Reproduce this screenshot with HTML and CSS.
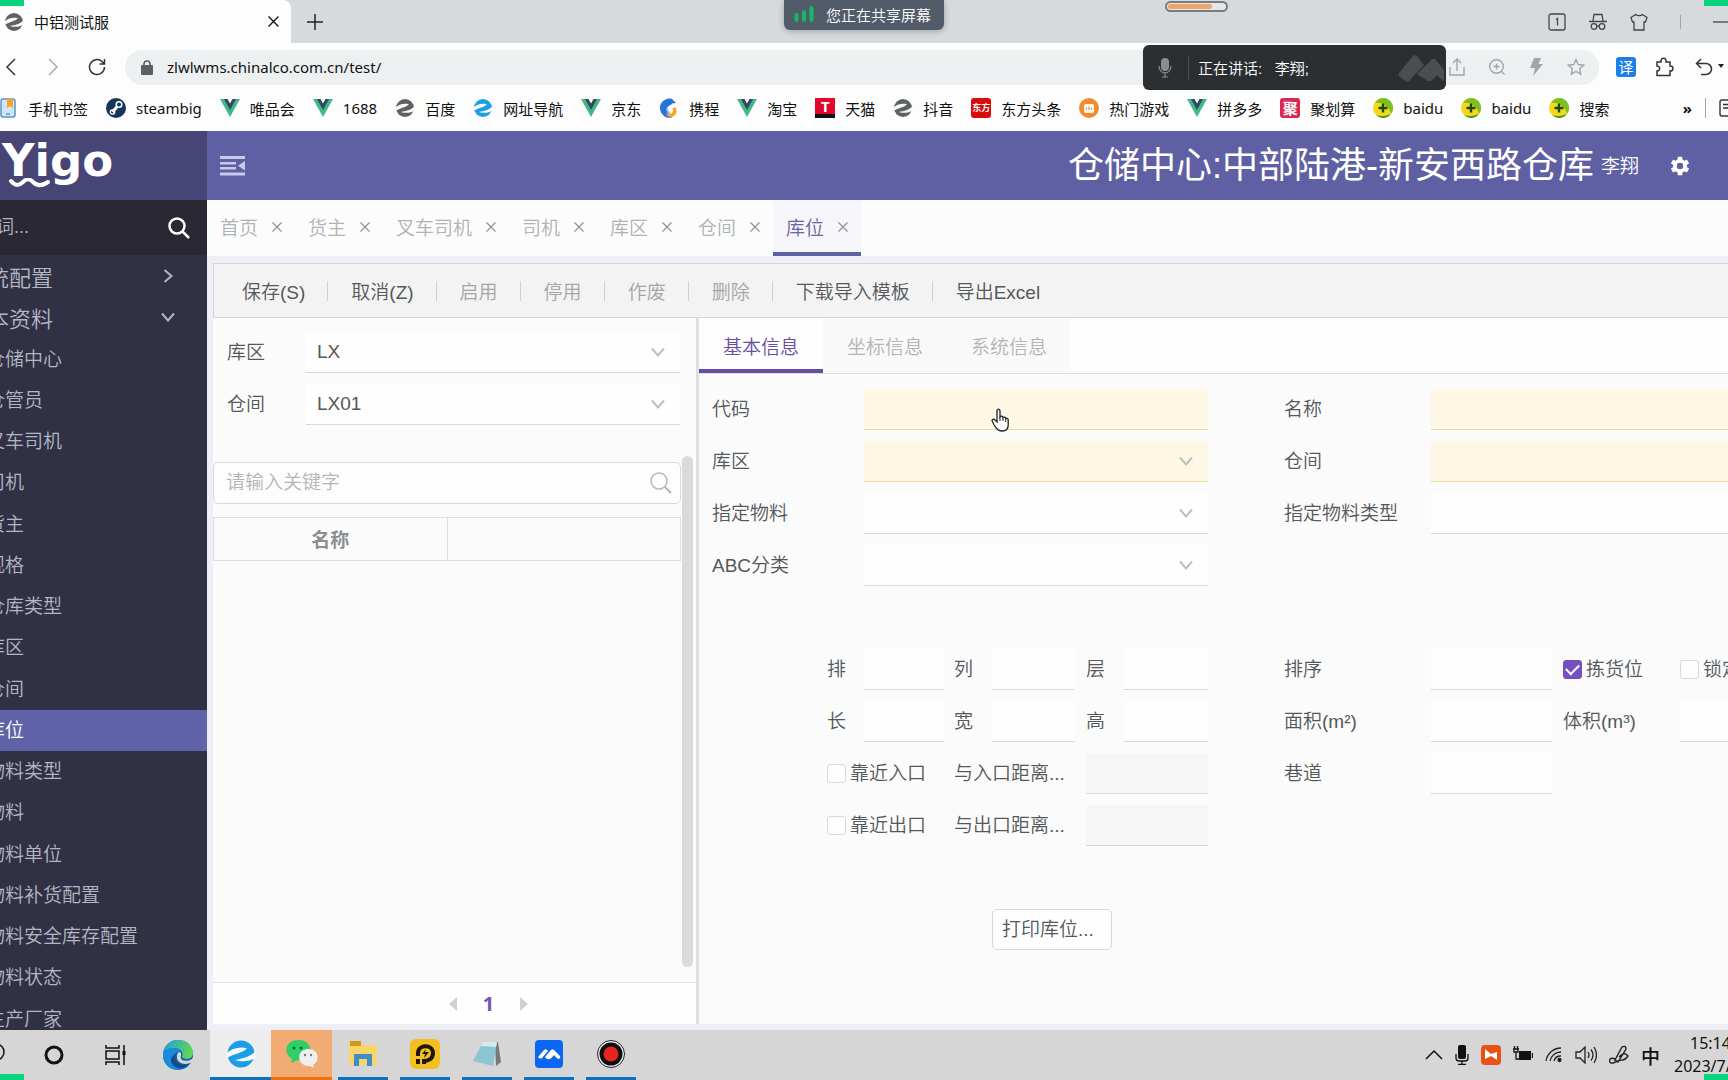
FILE: index.html
```html
<!DOCTYPE html>
<html lang="zh-CN">
<head>
<meta charset="utf-8">
<title>中铝测试服</title>
<link rel="stylesheet" href="styles.css">
</head>
<body>
<svg class="defs" aria-hidden="true">
  <symbol id="chev" viewBox="0 0 14 14"><path d="M1 3.5 7 10.5 13 3.5" fill="none" stroke="currentColor" stroke-width="2"/></symbol>
  <symbol id="close" viewBox="0 0 10 10"><path d="M.5.5l9 9M9.500.5l-9 9" fill="none" stroke="currentColor" stroke-width="1.200"/></symbol>
  <symbol id="vue" viewBox="0 0 20 20"><path d="M0 1h20L10 19z" fill="#41b883"/><path d="M4 1h12l-6 11z" fill="#35495e"/><path d="M7.500 1h5L10 5.500z" fill="#fff"/></symbol>
  <symbol id="elogo" viewBox="0 0 20 20"><circle cx="10" cy="10" r="9" fill="currentColor"/><path d="M0 10C4 6 9 5 14 6.200C11 9.500 6 9.500 0 13z" fill="#f8f8f8"/><path d="M20 8v4.500C16 15 10 15.500 6 14C11 13 16 12 20 8z" fill="#f8f8f8"/></symbol>
  <symbol id="plus360" viewBox="0 0 20 20"><circle cx="10" cy="10" r="10" fill="#f4d81c"/><path d="M10 0a10 10 0 0 1 8 16C16 9 11 4 2 5a10 10 0 0 1 8-5z" fill="#7cc122"/><path d="M3 17A10 10 0 0 0 18 16c-5 2-10 3-15 1z" fill="#3e9a1c"/><path d="M10 5.500v9M5.500 10h9" stroke="#1c4b10" stroke-width="2.400"/></symbol>
</svg>

<div class="screen">
  <header class="browser">
    <div class="strip">
      <div class="btab">
        <svg class="i20 grey"><use href="#elogo"/></svg>
        <span>中铝测试服</span>
        <button class="plain" aria-label="关闭标签页"><svg width="11" height="11"><use href="#close"/></svg></button>
      </div>
      <button class="plain newtab" aria-label="新标签页"><svg width="16" height="16" viewBox="0 0 16 16"><path d="M8 0v16M0 8h16" stroke="#222" stroke-width="1.500"/></svg></button>
      <div class="winicons">
        <svg width="18" height="18" viewBox="0 0 18 18" fill="none" stroke="#444" stroke-width="1.300"><rect x="1" y="1" width="16" height="16" rx="2"/><path d="M8 6.500l1.500-1v7"/></svg>
        <svg width="18" height="18" viewBox="0 0 18 18" fill="none" stroke="#444" stroke-width="1.300"><path d="M4 8l1-6.500h8L14 8M0 8.500h18"/><circle cx="5" cy="13.500" r="2.800"/><circle cx="13" cy="13.500" r="2.800"/><path d="M7.800 13h2.400"/></svg>
        <svg width="18" height="18" viewBox="0 0 18 18" fill="none" stroke="#444" stroke-width="1.300"><path d="M5.500 1.500C7 3 11 3 12.500 1.500L17 4.500 15.500 9H14v8H4V9H2.500L1 4.500z"/></svg>
        <i class="bar"></i>
        <svg width="15" height="18" viewBox="0 0 15 18"><path d="M0 9h15" stroke="#444" stroke-width="1.300"/></svg>
      </div>
    </div>

    <div class="navrow">
      <button class="plain" aria-label="后退"><svg width="10" height="18" viewBox="0 0 10 18" fill="none" stroke="#333" stroke-width="1.500"><path d="M9 1 1 9l8 8"/></svg></button>
      <button class="plain" aria-label="前进"><svg width="10" height="18" viewBox="0 0 10 18" fill="none" stroke="#aaa" stroke-width="1.500"><path d="M1 1l8 8-8 8"/></svg></button>
      <button class="plain" aria-label="刷新"><svg width="18" height="18" viewBox="0 0 18 18" fill="none" stroke="#333" stroke-width="1.500"><path d="M16.500 9A7.500 7.500 0 1 1 14 3.500L16 5.500M16.500 1v5h-5"/></svg></button>
      <div class="address">
        <svg width="12" height="15" viewBox="0 0 12 15"><rect y="5" width="12" height="10" rx="1" fill="#5b5e62"/><path d="M3 6V4a3 3 0 0 1 6 0v2" fill="none" stroke="#5b5e62" stroke-width="1.600"/></svg>
        <input class="url" aria-label="地址" value="zlwlwms.chinalco.com.cn/test/">
        <div class="addricons">
          <svg width="16" height="18" viewBox="0 0 16 18"><path d="M1 9v8h14V9M8 13V1M4 5l4-4 4 4"/></svg>
          <svg width="16" height="18" viewBox="0 0 16 18"><circle cx="7.500" cy="8.500" r="6.800"/><path d="M7.500 5.500v6M4.500 8.500h6M12.500 13.500l3 3"/></svg>
          <svg width="14" height="18" viewBox="0 0 14 18"><path d="M5 0h7L9.500 6H14L4 18l2-8H1z" fill="#a2a5a8" stroke="none"/></svg>
          <svg width="18" height="18" viewBox="0 0 18 18"><path d="M9 1.500l2.300 5 5.400.6-4 3.700 1.100 5.400L9 13.500l-4.800 2.700 1.100-5.400-4-3.700 5.400-.6z"/></svg>
        </div>
      </div>
      <div class="tools">
        <span class="trans">译</span>
        <svg width="20" height="20" viewBox="0 0 20 20" fill="none" stroke="#333" stroke-width="1.500"><path d="M3 5h4c-1-5 6-5 5 0h4v4c4-.5 4 5.500 0 5v4.500H3V14c3.500.5 3.500-5.500 0-5z"/></svg>
        <svg width="29" height="18" viewBox="0 0 29 18" fill="none" stroke="#333" stroke-width="1.500"><path d="M6 1 1.500 5.500 6 10M2 5.500h9a5.500 5.500 0 0 1 0 11H6"/><path d="M23 6h6l-3 4z" fill="#222" stroke="none"/></svg>
      </div>
    </div>

    <nav class="bookmarks">
      <a href="#"><svg class="i20" viewBox="0 0 20 20"><rect x="3" y="1" width="14" height="18" rx="2" fill="#cfe6fa" stroke="#5a93c9" stroke-width="1.500"/><path d="M9 1h6v9l-3-2-3 2z" fill="#f6a51c"/><path d="M8 16h4" stroke="#3b78b5"/></svg>手机书签</a>
      <a href="#"><svg class="i20" viewBox="0 0 20 20"><circle cx="10" cy="10" r="10" fill="#16355c"/><path d="M6.500 14l6.500-7.500" stroke="#fff" stroke-width="3"/><circle cx="6.500" cy="14" r="2.200" fill="none" stroke="#fff" stroke-width="1.300"/><circle cx="13" cy="6.500" r="2.800" fill="#16355c" stroke="#fff" stroke-width="1.500"/></svg>steambig</a>
      <a href="#"><svg class="i20"><use href="#vue"/></svg>唯品会</a>
      <a href="#"><svg class="i20"><use href="#vue"/></svg>1688</a>
      <a href="#"><svg class="i20 grey"><use href="#elogo"/></svg>百度</a>
      <a href="#"><svg class="i20 blue"><use href="#elogo"/></svg>网址导航</a>
      <a href="#"><svg class="i20"><use href="#vue"/></svg>京东</a>
      <a href="#"><svg class="i20" viewBox="0 0 20 20"><path d="M1 11C0 5 7-1 13 1l4 4-4 .5c0 2-5 1-5 6 0 4 3 6 6 5l-1 3C7 21 2 17 1 11z" fill="#2673d9"/><path d="M16 9c3.500 4 1 9.500-4 10-3 0-5-2-4.500-4 4 2.500 8-1 6-4.500z" fill="#f4a62a"/><path d="M8 10c0 3 1.500 4.500 3 5" fill="none" stroke="#8cc0f4" stroke-width="2"/></svg>携程</a>
      <a href="#"><svg class="i20"><use href="#vue"/></svg>淘宝</a>
      <a href="#"><span class="fav tmall">T</span>天猫</a>
      <a href="#"><svg class="i20 grey"><use href="#elogo"/></svg>抖音</a>
      <a href="#"><span class="fav east">东方</span>东方头条</a>
      <a href="#"><svg class="i20" viewBox="0 0 20 20"><circle cx="10" cy="10" r="10" fill="#f58a2c"/><rect x="5" y="6" width="10" height="9" rx="2" fill="#fff"/><path d="M7.500 12V9.500M10 12V8.500M12.500 12V9.500" stroke="#f58a2c" stroke-width="1.200"/></svg>热门游戏</a>
      <a href="#"><svg class="i20"><use href="#vue"/></svg>拼多多</a>
      <a href="#"><span class="fav ju">聚</span>聚划算</a>
      <a href="#"><svg class="i20"><use href="#plus360"/></svg>baidu</a>
      <a href="#"><svg class="i20"><use href="#plus360"/></svg>baidu</a>
      <a href="#"><svg class="i20"><use href="#plus360"/></svg>搜索</a>
      <div class="more"><b>»</b><i class="bar tall"></i><svg width="9" height="18" viewBox="0 0 9 18" fill="none" stroke="#333" stroke-width="1.400"><path d="M9 1H3a2 2 0 0 0-2 2v12a2 2 0 0 0 2 2h6M4 5.500h5M4 9h5"/></svg></div>
    </nav>
  </header>

  <div class="app">
    <aside class="side">
      <div class="logo">
        <span>Yigo</span>
        <svg class="wave" width="42" height="10" viewBox="0 0 42 10"><path d="M2 3c4 5 8 5 12 1s7-3 10 0 8 5 15 0" fill="none" stroke="#fff" stroke-width="4" stroke-linecap="round"/></svg>
      </div>
      <div class="sfind">
        <input aria-label="菜单搜索" placeholder="关键词...">
        <svg width="22" height="22" viewBox="0 0 22 22" fill="none" stroke="#fff" stroke-width="2.500"><circle cx="9" cy="9" r="7.500"/><path d="M14.500 14.500 21 21"/></svg>
      </div>
      <nav class="menu">
        <button class="group">系统配置<svg class="right" width="14" height="14"><use href="#chev"/></svg></button>
        <button class="group">基本资料<svg width="14" height="14"><use href="#chev"/></svg></button>
        <div class="items">
        <a href="#">仓储中心</a><a href="#">仓管员</a><a href="#">叉车司机</a><a href="#">司机</a><a href="#">货主</a><a href="#">规格</a><a href="#">仓库类型</a><a href="#">库区</a><a href="#">仓间</a><a href="#" class="on">库位</a><a href="#">物料类型</a><a href="#">物料</a><a href="#">物料单位</a><a href="#">物料补货配置</a><a href="#">物料安全库存配置</a><a href="#">物料状态</a><a href="#">生产厂家</a>
        </div>
      </nav>
    </aside>

    <main class="main">
      <div class="top">
        <button class="plain" aria-label="收起菜单"><svg width="25" height="20" viewBox="0 0 25 20" fill="#c9caea"><path d="M0 0h25v3H0zM0 6h16v2.500H0zM0 11h16v2.500H0zM0 16.500h25v3H0zM25 5v9.500l-7-4.750z"/></svg></button>
        <div class="topright">
          <span class="title">仓储中心:中部陆港-新安西路仓库</span>
          <span class="user">李翔</span>
          <svg class="gear" width="20" height="20" viewBox="0 0 20 20"><path d="M10 .8v18.400M2 5.400l16 9.200M2 14.600l16-9.200" stroke="#fff" stroke-width="4.600"/><circle cx="10" cy="10" r="7" fill="#fff"/><circle cx="10" cy="10" r="3.200" fill="#5f60a3"/></svg>
        </div>
      </div>
      <div class="ptabs">
        <div class="ptab"><a href="#">首页</a><button class="plain" aria-label="关闭首页"><svg width="10" height="10"><use href="#close"/></svg></button></div>
        <div class="ptab"><a href="#">货主</a><button class="plain" aria-label="关闭货主"><svg width="10" height="10"><use href="#close"/></svg></button></div>
        <div class="ptab"><a href="#">叉车司机</a><button class="plain" aria-label="关闭叉车司机"><svg width="10" height="10"><use href="#close"/></svg></button></div>
        <div class="ptab"><a href="#">司机</a><button class="plain" aria-label="关闭司机"><svg width="10" height="10"><use href="#close"/></svg></button></div>
        <div class="ptab"><a href="#">库区</a><button class="plain" aria-label="关闭库区"><svg width="10" height="10"><use href="#close"/></svg></button></div>
        <div class="ptab"><a href="#">仓间</a><button class="plain" aria-label="关闭仓间"><svg width="10" height="10"><use href="#close"/></svg></button></div>
        <div class="ptab on"><a href="#">库位</a><button class="plain" aria-label="关闭库位"><svg width="10" height="10"><use href="#close"/></svg></button></div>
      </div>

      <div class="work">
        <div class="actions">
          <button>保存(S)</button><i></i><button>取消(Z)</button><i></i><button disabled>启用</button><i></i><button disabled>停用</button><i></i><button disabled>作废</button><i></i><button disabled>删除</button><i></i><button>下载导入模板</button><i></i><button>导出Excel</button>
        </div>
        <div class="split">
          <section class="list">
            <div class="filters">
              <label for="fa">库区</label>
              <div class="sel"><select id="fa"><option>LX</option></select><svg width="14" height="14"><use href="#chev"/></svg></div>
              <label for="fb">仓间</label>
              <div class="sel"><select id="fb"><option>LX01</option></select><svg width="14" height="14"><use href="#chev"/></svg></div>
            </div>
            <div class="listbody">
              <div class="listmain">
                <div class="kw">
                  <input aria-label="关键字" placeholder="请输入关键字">
                  <svg width="22" height="22" viewBox="0 0 22 22" fill="none" stroke="#b3b7ba" stroke-width="1.500"><circle cx="9" cy="9" r="8"/><path d="M15 15l6 6" stroke-width="2"/></svg>
                </div>
                <table><thead><tr><th>名称</th><th></th></tr></thead></table>
              </div>
              <div class="scroll"></div>
            </div>
            <div class="pager">
              <button class="plain" aria-label="上一页"><svg width="8" height="14" viewBox="0 0 8 14"><path d="M8 0v14L0 7z" fill="#d0d0d0"/></svg></button>
              <b>1</b>
              <button class="plain" aria-label="下一页"><svg width="8" height="14" viewBox="0 0 8 14"><path d="M0 0v14l8-7z" fill="#d0d0d0"/></svg></button>
            </div>
          </section>

          <section class="detail">
            <div class="dtabs"><button class="on">基本信息</button><button>坐标信息</button><button>系统信息</button></div>
            <form class="form">
              <label class="r1 c1" for="code">代码</label><input class="r1 wide req" id="code">
              <label class="r1 c9" for="name">名称</label><input class="r1 rest req" id="name">
              <label class="r2 c1" for="area">库区</label>
              <div class="r2 wide sel req"><select id="area"><option></option></select><svg width="14" height="14"><use href="#chev"/></svg></div>
              <label class="r2 c9" for="room">仓间</label><input class="r2 rest req" id="room">
              <label class="r3 c1" for="mat">指定物料</label>
              <div class="r3 wide sel"><select id="mat"><option></option></select><svg width="14" height="14"><use href="#chev"/></svg></div>
              <label class="r3 c9" for="mtype">指定物料类型</label><input class="r3 rest" id="mtype">
              <label class="r4 c1" for="abc">ABC分类</label>
              <div class="r4 wide sel"><select id="abc"><option></option></select><svg width="14" height="14"><use href="#chev"/></svg></div>

              <label class="r6 c2" for="row">排</label><input class="r6 c3" id="row">
              <label class="r6 c4" for="col">列</label><input class="r6 c5" id="col">
              <label class="r6 c6" for="lay">层</label><input class="r6 c7" id="lay">
              <label class="r6 c9" for="ord">排序</label><input class="r6 c10" id="ord">
              <div class="r6 c11 chk"><input type="checkbox" id="pick" checked><label for="pick">拣货位</label></div>
              <div class="r6 c12 chk"><input type="checkbox" id="lock"><label for="lock">锁定</label></div>

              <label class="r7 c2" for="len">长</label><input class="r7 c3" id="len">
              <label class="r7 c4" for="wid">宽</label><input class="r7 c5" id="wid">
              <label class="r7 c6" for="hei">高</label><input class="r7 c7" id="hei">
              <label class="r7 c9" for="sq">面积(m²)</label><input class="r7 c10" id="sq">
              <label class="r7 c11" for="vol">体积(m³)</label><input class="r7 c12" id="vol">

              <div class="r8 near chk"><input type="checkbox" id="nin"><label for="nin">靠近入口</label></div>
              <label class="r8 dist" for="din">与入口距离...</label><input class="r8 dfield" id="din" disabled>
              <label class="r8 c9" for="lane">巷道</label><input class="r8 c10" id="lane">
              <div class="r9 near chk"><input type="checkbox" id="nout"><label for="nout">靠近出口</label></div>
              <label class="r9 dist" for="dout">与出口距离...</label><input class="r9 dfield" id="dout" disabled>
              <button type="button" class="print">打印库位...</button>
            </form>
          </section>
        </div>
      </div>
    </main>
  </div>

  <footer class="task">
    <div class="start">
      <svg width="54" height="26" viewBox="0 0 54 26"><circle cx="-4" cy="10" r="8" fill="none" stroke="#111" stroke-width="1.500"/></svg>
    </div>
    <button class="sys" aria-label="Cortana"><svg width="20" height="20" viewBox="0 0 20 20"><circle cx="10" cy="10" r="8" fill="none" stroke="#111" stroke-width="3"/></svg></button>
    <button class="sys" aria-label="任务视图"><svg width="22" height="20" viewBox="0 0 22 20" fill="none" stroke="#111" stroke-width="1.500"><path d="M1 0v3h13V0M1 20v-3h13v3M1 6h13v8H1zM19 0v20"/><path d="M17.500 6h3v4h-3z" fill="#111" stroke="none"/></svg></button>
    <button class="sys" aria-label="Edge"><svg width="30" height="30" viewBox="0 0 30 30"><defs><linearGradient id="eg" x1="0" y1="0" x2="1" y2="0.300"><stop offset="0" stop-color="#1f9de0"/><stop offset="1" stop-color="#5fd35c"/></linearGradient></defs><circle cx="15" cy="15" r="15" fill="#1460ad"/><path d="M0 13C2-4 29-5 30 13c0 7-9 7-11 4 4-9-13-13-19-4z" fill="url(#eg)"/><path d="M0 13c3-6 15-7 17-1-6-1-8 5-5 9 3 5 9 5 14 3C18 34-1 31 0 13z" fill="#1b8bd8"/><path d="M13 15c-3 5 2 12 13 9-6 8-17 4-18-3 0-4 2-6 5-6z" fill="#0e4b92"/><path d="M17 12c3 3-1 5 2 8 3 1.500 8 1 11-2v4l-3 1c-8 3-14-2-13-7 0-2 1-4 3-4z" fill="#d6d6d6"/></svg></button>
    <button class="ap lit" aria-label="浏览器"><svg class="blue" width="30" height="30"><use href="#elogo"/></svg></button>
    <button class="ap hot" aria-label="微信"><svg width="32" height="28" viewBox="0 0 32 28"><path d="M12 0c17 0 16 20 0 20l-7 3 1-4C-4 13 0 0 12 0z" fill="#2fcf68"/><circle cx="8" cy="8" r="1.500" fill="#12652f"/><circle cx="15" cy="8" r="1.500" fill="#12652f"/><path d="M22 9c12 0 12 13 5 16l1 3-4-2C10 27 10 9 22 9z" fill="#efefef"/><circle cx="19" cy="15" r="1.200" fill="#777"/><circle cx="25" cy="15" r="1.200" fill="#777"/></svg></button>
    <button class="ap run" aria-label="文件资源管理器"><svg width="28" height="26" viewBox="0 0 28 26"><path d="M0 1h11l2 3h15v20H0z" fill="#f9d568"/><path d="M1 0h11v5H1z" fill="#d19a1c"/><path d="M5 13h18v12h-5v-7h-8v7H5z" fill="#3d8fc9"/></svg></button>
    <button class="ap run" aria-label="D"><svg width="30" height="30" viewBox="0 0 30 30"><rect width="30" height="30" rx="6" fill="#f4bf1f"/><path d="M8 17v-3c0-9 15-9 15 0 0 6-5 8-10 8" fill="none" stroke="#1b1711" stroke-width="4"/><path d="M6 20h4v5H6zM12 20h4v5h-4z" fill="#1b1711"/><path d="M16 10l-4 5h3l-1 4 5-6h-4z" fill="#1b1711"/></svg></button>
    <button class="ap run" aria-label="记事本"><svg width="28" height="26" viewBox="0 0 28 26"><path d="M22 1h3l3 20-5 4z" fill="#777a70"/><path d="M10 1h14l-4 24L0 20z" fill="#8cc5d3"/><path d="M10 1h14l-1 5-15-1z" fill="#d4ecf1"/></svg></button>
    <button class="ap run" aria-label="会议"><svg width="28" height="28" viewBox="0 0 28 28"><rect width="28" height="28" rx="4" fill="#0b66f2"/><path d="M3 17l6-7q1.500-1.500 3 0l1 1-6 7q-2 1.500-4-1zM10 17l6-7q1.500-1.500 3 0l6 6q1 2-1 3-2 0-5-4-3 4-4.500 4Q12 20 10 17z" fill="#fff"/></svg></button>
    <button class="ap run" aria-label="录屏"><svg width="28" height="28" viewBox="0 0 28 28"><circle cx="14" cy="14" r="13.500" fill="#eee" stroke="#222"/><circle cx="14" cy="14" r="11.500" fill="#0e0c0d"/><circle cx="14" cy="14" r="7.500" fill="#e5231f"/></svg></button>
    <div class="tray">
      <svg width="18" height="20" viewBox="0 0 18 20" fill="none" stroke="#111" stroke-width="1.500"><path d="M1 14l8-8 8 8"/></svg>
      <svg width="14" height="20" viewBox="0 0 14 20"><rect x="3" width="8" height="14" rx="2" fill="#111"/><path d="M1 9v4q0 3 3 3h6q3 0 3-3V9M7 16v3M3 19.300h8" fill="none" stroke="#111" stroke-width="1.300"/></svg>
      <svg width="20" height="20" viewBox="0 0 20 20"><rect width="20" height="20" rx="4" fill="#ea4f16"/><path d="M4 4l6 5 6-2v8l-6-4-6 3z" fill="#fff"/></svg>
      <svg width="20" height="20" viewBox="0 0 20 20"><path d="M6 6h12v9H6z" fill="#111"/><path d="M19.500 8v5M0 4h6M1.500 1v3M4.500 1v3M1 4v3h4V4M3 7v7h3" stroke="#111" fill="none" stroke-width="1.300"/></svg>
      <svg width="18" height="20" viewBox="0 0 18 20" fill="none" stroke="#222" stroke-width="1.300"><path d="M1 16A15 15 0 0 1 16 3M5 16A11 11 0 0 1 16 7M9 16a7 7 0 0 1 7-5"/><circle cx="14.500" cy="15" r="1.500" fill="#111"/></svg>
      <svg width="22" height="20" viewBox="0 0 22 20" fill="none" stroke="#222" stroke-width="1.300"><path d="M1 7h4l5-5v16l-5-5H1zM13 7q2 3 0 6M16 4.500q4 5.500 0 11M19 2q5 8 0 16"/></svg>
      <svg width="20" height="20" viewBox="0 0 20 20" fill="none" stroke="#222" stroke-width="1.400"><path d="M6 15L13 2q4-2 4 2L9 17zM6 14c-7-3-7 5-2 4l5-2c5-2 6 1 10-5-3-4-6-2-9 1"/></svg>
      <span class="ime">中</span>
      <div class="clock"><span>15:14</span><span>2023/7/</span></div>
    </div>
  </footer>

  <i class="mark tl"></i><i class="mark tr"></i><i class="mark bl"></i><i class="mark br"></i>
  <div class="share"><svg width="20" height="16" viewBox="0 0 20 16" stroke="#16b866" stroke-width="4" stroke-linecap="round"><path d="M2.500 9v5M10 6v8M17.500 2v12"/></svg>您正在共享屏幕</div>
  <div class="gauge"><i></i></div>
  <div class="talk">
    <svg width="14" height="20" viewBox="0 0 14 20"><rect x="3" width="8" height="13" rx="4" fill="#8a8e91"/><path d="M1 8c0 9 12 9 12 0M7 15v4M4 19h6" fill="none" stroke="#8a8e91" stroke-width="1.200"/></svg>
    <i class="bar"></i><span>正在讲话:&nbsp;&nbsp; 李翔;</span>
    <svg class="mm" width="46" height="28" viewBox="0 0 46 28"><path d="M1 19L15 2q3-2 5 1l6 8L11 27q-3 2-5-1l-5-4q-1-1 0-3zM19 20L34 5q2-1 4 1l8 10v11q-3-1-7-6l-6 6q-3 1-5-1z" fill="#4b4d51"/></svg>
  </div>
  <svg class="hand" width="18" height="24" viewBox="0 0 18 24"><path d="M6 14V3c0-2.500 3-2.500 3 0v6c1-1.500 3-1 3 .6 1-1 2.700-.4 2.700 1 1-.8 2.500 0 2.500 1.400v5c0 4-2 6-6 6-5 0-6-3-8-6l-2-4c-.6-1.500 1.500-2.500 2.800-1z" fill="#fff" stroke="#222" stroke-width="1.300"/><path d="M9 9v4M12 10v3M14.700 11v3" stroke="#222"/></svg>
</div>
</body>
</html>
```
FILE: styles.css
```css
* { box-sizing: border-box; }
body {
  margin: 0;
  overflow: hidden;
  font-family: "Liberation Sans", "Noto Sans CJK SC", sans-serif;
  font-size: 19px;
  font-weight: 350;
  color: #54585a;
}
button, input, select { font: inherit; color: inherit; margin: 0; }
a { color: inherit; text-decoration: none; }
svg { display: block; flex: none; }
.defs { display: none; }
.plain { border: 0; padding: 0; background: none; display: block; }
.i20 { width: 20px; height: 20px; }
.grey { color: #5f6265; }
.blue { color: #1a9fe6; }
.bar { width: 1px; height: 14px; background: #a2a5a8; }
.tall { height: 20px; }
.screen { position: relative; height: 100vh; display: flex; flex-direction: column; }

/* browser chrome */
.browser { flex: none; background: #fdfdfd; color: #111; font-size: 15px; font-weight: 400; font-family: "Noto Sans", "Noto Sans CJK SC", sans-serif; }
.strip { height: 43px; display: flex; align-items: center; background: #d6dadd; }
.btab { width: 291px; height: 43px; padding: 0 12px 0 4px; display: flex; align-items: center; gap: 10px; background: #fdfdfd; border-radius: 0 8px 0 0; }
.btab button { margin-left: auto; }
.newtab { margin-left: 16px; }
.winicons { margin-left: auto; display: flex; align-items: center; gap: 23px; }
.winicons .bar { margin: 0 9px; }
.navrow { height: 48px; display: flex; align-items: center; padding: 0 4px 0 6px; }
.navrow > button { margin-right: 32px; }
.navrow > button + button { margin-right: 30px; }
.navrow > button + button + button { margin-right: 19px; }
.address { flex: 1; height: 35px; border-radius: 18px; background: #edf0f1; display: flex; align-items: center; padding: 0 14px 0 16px; gap: 14px; }
.url { flex: 1; border: 0; padding: 0; background: none; }
.addricons { display: flex; gap: 24px; fill: none; stroke: #a2a5a8; stroke-width: 1.4; }
.tools { display: flex; align-items: center; gap: 28px; padding-left: 17px; }
.tools svg + svg { margin-left: -7px; }
.trans { width: 20px; height: 20px; border-radius: 3px; background: #1d7fea; color: #fff; line-height: 20px; text-align: center; }
.tools .trans { margin-right: -10px; }
.bookmarks { height: 40px; padding-bottom: 6px; display: flex; align-items: center; gap: 18px; margin-left: -2px; white-space: nowrap; }
.bookmarks a { display: flex; align-items: center; gap: 10px; }
.fav { width: 20px; height: 20px; border-radius: 3px; color: #fff; text-align: center; line-height: 20px; font-weight: 700; }
.tmall { background: #e2062c; border-radius: 0; border-bottom: 4px solid #111; line-height: 16px; }
.east { background: #d90b0b; font-size: 9px; }
.ju { background: #db2850; }
.more { margin-left: auto; display: flex; align-items: center; gap: 13px; }

/* application frame */
.app { flex: 1; min-height: 0; display: flex; overflow: hidden; }
.side { flex: none; width: 247px; margin-left: -40px; display: flex; flex-direction: column; background: #303145; color: #b4b6c4; overflow: hidden; }
.logo { flex: none; height: 69px; padding-left: 42px; background: #464576; color: #fff; font: 700 45px/59px "DejaVu Sans", sans-serif; position: relative; }
.wave { position: absolute; left: 49px; top: 47px; }
.sfind { flex: none; height: 55px; padding-right: 17px; display: flex; align-items: center; background: #2a2833; }
.sfind input { flex: 1; min-width: 0; border: 0; padding: 0; background: none; font-size: 18px; }
.sfind input::placeholder { color: #b4b6c4; }
.menu { flex: 1; min-height: 0; overflow: hidden; }
.items { padding-top: 2px; }
.items a { display: block; height: 41px; line-height: 41px; padding-left: 26px; }
.items a:nth-child(4n) { margin-bottom: 1px; }
.items .on { background: #6063a8; color: #fff; }
.group { width: 100%; height: 41px; border: 0; background: none; padding: 0 32px 0 5px; display: flex; align-items: center; justify-content: space-between; font-size: 22px; }
.right { transform: rotate(-90deg); }

.main { flex: 1; min-width: 0; display: flex; flex-direction: column; background: #eff0f5; }
.top { flex: none; height: 69px; padding: 0 38px 0 13px; display: flex; align-items: center; justify-content: space-between; background: #5f60a3; color: #fff; }
.topright { display: flex; align-items: center; white-space: nowrap; }
.title { font-size: 36px; line-height: 69px; font-weight: 400; }
.user { margin-left: 7px; padding-bottom: 3px; }
.gear { margin-left: 31px; }
.ptabs { flex: none; height: 56px; display: flex; background: #fcfcfd; color: #b0b2b4; }
.ptab { display: flex; align-items: center; gap: 14px; padding: 0 13px; border-bottom: 4px solid transparent; }
.ptab button { color: #8f9294; padding-top: 2px; }
.ptab.on { color: #6765a0; background: #f5f5fa; border-color: #5f60a3; }

.work { flex: 1; min-height: 0; margin: 7px 0 6px 6px; display: flex; flex-direction: column; background: #fbfbfb; }
.actions { flex: none; height: 55px; padding-left: 5px; display: flex; align-items: center; background: #f3f3f3; border: 1px solid #d3d7da; border-right: 0; }
.actions button { border: 0; background: none; padding: 0 22px 1px 23px; white-space: nowrap; }
.actions button:disabled { color: #a3a5a6; }
.actions i { width: 1px; height: 20px; background: #cfd2d4; }
.split { flex: 1; min-height: 0; display: flex; }

/* location list */
.list { flex: none; width: 486px; display: flex; flex-direction: column; border-right: 3px solid #dedfe1; }
.filters { display: grid; grid-template-columns: 79px 1fr; row-gap: 11px; padding: 14px 16px 0 14px; align-items: center; margin-bottom: 31px; }
label { padding-bottom: 4px; }
.sel { display: grid; align-items: center; height: 41px; background: #fefefe; border-bottom: 1px solid #d6d8da; }
.sel > * { grid-area: 1 / 1; }
.sel select { appearance: none; width: 100%; height: 100%; border: 0; padding: 0 11px 2px; background: none; }
.sel svg { justify-self: end; margin-right: 15px; color: #bcbfc0; }
.listbody { flex: 1; min-height: 0; display: flex; }
.listmain { width: 468px; padding-top: 6px; }
.kw { height: 42px; display: flex; align-items: center; padding: 0 8px 0 12px; border: 1px solid #d6dadd; border-radius: 5px; background: #fdfdfd; }
.kw input { flex: 1; border: 0; padding: 0; background: none; }
.kw input::placeholder { color: #b3b6b8; }
.list table { width: 100%; margin-top: 13px; border-collapse: collapse; table-layout: fixed; }
.list th { height: 43px; padding: 0 0 2px; border: 1px solid #dddfe0; font-weight: 700; color: #8b8f90; }
.scroll { width: 11px; margin: 0 0 15px 1px; border-radius: 6px; background: #d9dadb; }
.pager { flex: none; height: 42px; display: flex; justify-content: center; align-items: center; gap: 26px; padding-left: 68px; border-top: 1px solid #e0e2e3; background: #fefefe; color: #7256b4; }
.pager b { font: 700 20px "Open Sans", sans-serif; }

/* location detail */
.detail { flex: 1; min-width: 0; overflow: hidden; }
.dtabs { height: 56px; display: flex; border-bottom: 1px solid #dcdfe0; background: #fefefe; }
.dtabs button { width: 124px; border: 0; border-bottom: 4px solid transparent; padding: 4px 0 0; background: #f9f9f9; color: #b3b5b6; }
.dtabs .on { color: #6a4ba3; background: #fefefe; border-color: #6a4ba3; }
.form { padding: 15px 0 0 13px; display: grid; gap: 11px 0; grid-template-rows: repeat(11, 41px); align-items: center; white-space: nowrap;
  grid-template-columns: 115px 37px 90px 38px 94px 38px 84px 76px 147px 132px 117px minmax(48px, 1fr); }
.form input { width: 100%; min-width: 0; height: 41px; border: 0; border-bottom: 1px solid #d6d8da; background: #fefefe; border-radius: 0; }
.form input:disabled { background: #f6f6f6; }
.form .req { background: #fdf7e4; border-color: #e9dba4; }
.form .chk { display: flex; align-items: center; gap: 4px; }
.form .chk input { appearance: none; flex: none; width: 19px; height: 19px; border: 1px solid #d6d8da; border-radius: 3px; display: grid; place-items: center; }
.form .chk input:checked { background: #7550c2; border-color: #7550c2; }
.form .chk input:checked::after { content: ""; width: 11px; height: 6px; margin-bottom: 3px; border: solid #fff; border-width: 0 0 2px 2px; transform: rotate(-45deg); }
.r1 { grid-row: 1; } .r2 { grid-row: 2; } .r3 { grid-row: 3; } .r4 { grid-row: 4; }
.r6 { grid-row: 6; } .r7 { grid-row: 7; } .r8 { grid-row: 8; } .r9 { grid-row: 9; }
.c1 { grid-column: 1; } .c2 { grid-column: 2; } .c3 { grid-column: 3; } .c4 { grid-column: 4; }
.c5 { grid-column: 5; } .c6 { grid-column: 6; } .c7 { grid-column: 7; } .c9 { grid-column: 9; }
.c10 { grid-column: 10; } .c11 { grid-column: 11; } .c12 { grid-column: 12; }
.form input.c3 { width: 80px; } .form input.c5 { width: 83px; } .form input.c10 { width: 121px; }
.wide { grid-column: 3 / 8; }
.rest { grid-column: 10 / 13; }
.near { grid-column: 2 / 4; }
.dist { grid-column: 4 / 6; }
.dfield { grid-column: 6 / 8; }
.print { grid-row: 11; grid-column: 5 / 7; width: 120px; height: 41px; padding: 0 0 4px 9px; text-align: left; border: 1px solid #d6d8da; border-radius: 5px; background: #fefefe; }

/* taskbar */
.task { flex: none; height: 50px; display: flex; background: #d6d6d6; color: #111; }
.start { width: 23px; overflow: hidden; display: flex; align-items: center; }
.task button { border: 0; padding: 0; background: none; display: flex; align-items: center; justify-content: center; }
.sys { width: 62px; }
.task .ap { width: 50px; margin: 0 6px; border-bottom: 3px solid #0b72c4; }
.task .lit { width: 61px; margin: 0 0 0 1px; background: #ededed; }
.task .hot { width: 61px; margin: 0; background: #f3ab74; border-color: #f0720f; }
.tray { margin-left: auto; display: flex; align-items: center; gap: 12px; }
.ime { font-size: 19px; font-weight: 500; }
.clock { width: 54px; margin-left: 2px; overflow: hidden; display: flex; flex-direction: column; font: 400 16px/23px "Noto Sans", sans-serif; white-space: nowrap; }
.clock span:first-child { padding-left: 16px; }

/* screen sharing overlays */
.mark { position: absolute; width: 24px; height: 6px; background: #08d37f; }
.tl { left: 0; top: 0; } .tr { right: 0; top: 0; } .bl { left: 0; bottom: 0; } .br { right: 0; bottom: 0; }
.share { position: absolute; left: 784px; top: 0; width: 160px; height: 30px; padding: 0 10px 2px; display: flex; align-items: center; gap: 12px; border-radius: 0 0 6px 6px; background: #525b69; color: #fff; font-size: 15px; white-space: nowrap; box-shadow: 0 1px 6px #9a9fa5; }
.gauge { position: absolute; left: 1165px; top: 1px; width: 63px; height: 11px; padding: 1px; border: 2px solid #777c80; border-radius: 6px; background: #e6e6e6; }
.gauge i { display: block; width: 44px; height: 5px; border-radius: 3px; background: #efa568; }
.talk { position: absolute; left: 1143px; top: 45px; width: 303px; height: 45px; padding: 0 2px 0 15px; display: flex; align-items: center; gap: 16px; border-radius: 6px; background: #2b2f32; color: #fff; font-size: 15px; white-space: nowrap; }
.talk .bar { height: 24px; background: #4a4e51; margin-right: -7px; }
.mm { margin-left: auto; }
.hand { position: absolute; left: 991px; top: 408px; }
```
